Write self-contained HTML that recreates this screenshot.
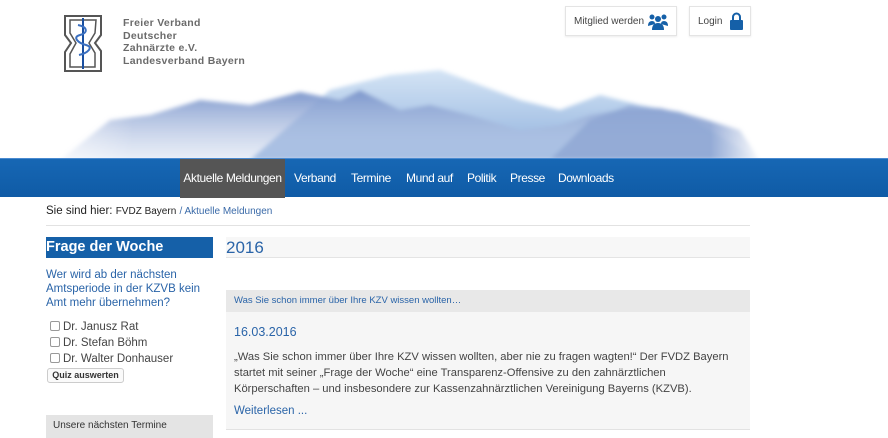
<!DOCTYPE html>
<html><head><meta charset="utf-8"><style>
*{margin:0;padding:0;box-sizing:border-box}
body{width:888px;height:438px;overflow:hidden;background:#fff;font-family:"Liberation Sans",sans-serif;position:relative;color:#333}
.a{position:absolute}
.btn{position:absolute;top:6px;height:30px;border:1px solid #e4e4e4;box-shadow:0 1px 2px rgba(0,0,0,.08);font-size:10px;color:#444;display:flex;align-items:center;padding-left:8px;background:#fff}
.nav{top:158px;left:0;width:888px;height:39px;background:linear-gradient(#1767b4,#0f5ba6);border-top:1px solid #4a8ad0}
.nav span{position:absolute;top:0;height:39px;line-height:39px;color:#fff;font-size:12px;letter-spacing:-.4px}
.cb{display:inline-block;width:10px;height:10px;border:1px solid #999;border-radius:2px;margin-right:3px;vertical-align:-1px;background:#fff}
</style></head><body>
<svg class="a" style="left:0;top:30px" width="888" height="130">
<defs>
<linearGradient id="g1" x1="0" y1="0" x2="0" y2="1"><stop offset="0" stop-color="#7d97cc"/><stop offset="1" stop-color="#c9d5ec" stop-opacity=".4"/></linearGradient>
<linearGradient id="g2" x1="0" y1="0" x2="0" y2="1"><stop offset="0" stop-color="#d4e4f5"/><stop offset="1" stop-color="#8eb0dc"/></linearGradient>
<linearGradient id="fl" x1="0" y1="0" x2="1" y2="0"><stop offset="0" stop-color="#fff" stop-opacity="1"/><stop offset=".15" stop-color="#fff" stop-opacity="0"/><stop offset=".8" stop-color="#fff" stop-opacity="0"/><stop offset=".86" stop-color="#fff" stop-opacity="1"/></linearGradient>
<filter id="bl"><feGaussianBlur stdDeviation="2"/></filter>
</defs>
<g filter="url(#bl)">
<polygon points="250,130 330,60 390,45 440,40 480,55 520,70 560,80 600,65 640,75 680,82 760,130" fill="url(#g2)"/>
<polygon points="60,130 110,90 150,85 200,70 250,75 300,62 340,70 360,60 400,80 430,75 470,85 520,100 560,95 590,85 620,80 660,78 700,88 740,100 760,130" fill="url(#g1)"/>
<polygon points="550,130 590,90 630,75 680,82 740,100 760,130" fill="#8aa3d2" opacity=".7"/>
</g>
<rect x="0" y="0" width="888" height="130" fill="url(#fl)"/>
</svg>
<svg class="a" style="left:64px;top:15px" width="38" height="57"><path d="M1,1H37V20L31,28L37,36V56H1V37L7,28L1,20Z" fill="#fff" stroke="#555" stroke-width="2"/><path d="M6,5H32L31,18L25,28L31,38V52H6V39L12,28L6,18Z" fill="none" stroke="#555" stroke-width="1.5"/><line x1="19" y1="3" x2="19" y2="54" stroke="#1a4fa0" stroke-width="2"/><path d="M14,10C24,12 24,18 16,20S14,28 22,30S24,38 15,40" fill="none" stroke="#3a6fc0" stroke-width="2"/></svg>
<div class="a" style="left:123px;top:17px;font-size:10.5px;font-weight:bold;color:#6b6b6b;line-height:12.5px;letter-spacing:.3px">Freier Verband<br>Deutscher<br>Zahnärzte e.V.<br>Landesverband Bayern</div>
<div class="btn" style="left:565px;width:112px">Mitglied werden
<svg style="position:absolute;right:8px;top:6px" width="20" height="17"><g fill="#1560a8"><circle cx="4" cy="4" r="2.5"/><circle cx="16" cy="4" r="2.5"/><circle cx="10" cy="6" r="3"/><path d="M0,13Q0,8 4,8Q7,8 7,11Z"/><path d="M20,13Q20,8 16,8Q13,8 13,11Z"/><path d="M4,17Q4,10 10,10Q16,10 16,17Z"/></g></svg></div>
<div class="btn" style="left:689px;width:62px">Login
<svg style="position:absolute;right:7px;top:5px" width="13" height="18"><path d="M3,8V5a3.5,3.5 0 0 1 7,0V8" fill="none" stroke="#1560a8" stroke-width="2"/><rect x="0" y="8" width="13" height="10" rx="1" fill="#1560a8"/></svg></div>
<div class="a nav">
<span style="left:180px;width:105px;background:#555;text-align:center">Aktuelle Meldungen</span>
<span style="left:294px">Verband</span><span style="left:351px">Termine</span><span style="left:406px">Mund auf</span><span style="left:467px">Politik</span><span style="left:510px">Presse</span><span style="left:558px">Downloads</span></div>
<div class="a" style="left:46px;top:205px;font-size:11.5px;color:#222">Sie sind hier: <span style="font-size:10px">FVDZ Bayern</span> <span style="font-size:10px;color:#3a6aa8">/ Aktuelle Meldungen</span></div>
<div class="a" style="left:46px;top:225px;width:704px;border-top:1px solid #e2e2e2"></div>
<div class="a" style="left:46px;top:237px;width:167px;height:21px;background:#1560a8;color:#fff;font-weight:bold;font-size:14.5px;line-height:21px">Frage der Woche</div>
<div class="a" style="left:46px;top:268px;font-size:11.5px;color:#2a64a8;line-height:14px">Wer wird ab der nächsten<br>Amtsperiode in der KZVB kein<br>Amt mehr übernehmen?</div>
<div class="a" style="left:50px;top:319px;font-size:11.5px;color:#444;line-height:16px"><span class="cb"></span>Dr. Janusz Rat<br><span class="cb"></span>Dr. Stefan Böhm<br><span class="cb"></span>Dr. Walter Donhauser</div>
<div class="a" style="left:47px;top:368px;width:77px;height:15px;border:1px solid #ccc;border-radius:3px;font-size:9px;font-weight:bold;text-align:center;line-height:13px;background:#fafafa">Quiz auswerten</div>
<div class="a" style="left:46px;top:415px;width:167px;height:23px;background:#e4e4e4;font-size:10px;color:#333;padding-left:7px;line-height:21px">Unsere nächsten Termine</div>
<div class="a" style="left:226px;top:237px;width:524px;height:21px;background:#f7f7f7;border-bottom:1px solid #e4e4e4;font-size:17px;color:#2a64a8;line-height:21px">2016</div>
<div class="a" style="left:226px;top:290px;width:524px;height:22px;background:#e8e8e8;font-size:9.5px;color:#2a64a8;padding-left:8px;line-height:22px">Was Sie schon immer über Ihre KZV wissen wollten…</div>
<div class="a" style="left:226px;top:312px;width:524px;height:118px;background:#f6f6f6;border-bottom:1px solid #e2e2e2"></div>
<div class="a" style="left:234px;top:325px;font-size:12.5px;color:#2a64a8">16.03.2016</div>
<div class="a" style="left:234px;top:349px;width:508px;font-size:11.2px;color:#444;line-height:16px">„Was Sie schon immer über Ihre KZV wissen wollten, aber nie zu fragen wagten!“ Der FVDZ Bayern startet mit seiner „Frage der Woche“ eine Transparenz-Offensive zu den zahnärztlichen Körperschaften – und insbesondere zur Kassenzahnärztlichen Vereinigung Bayerns (KZVB).</div>
<div class="a" style="left:234px;top:405px;font-size:11.5px;color:#2a64a8">Weiterlesen ...</div>
</body></html>
